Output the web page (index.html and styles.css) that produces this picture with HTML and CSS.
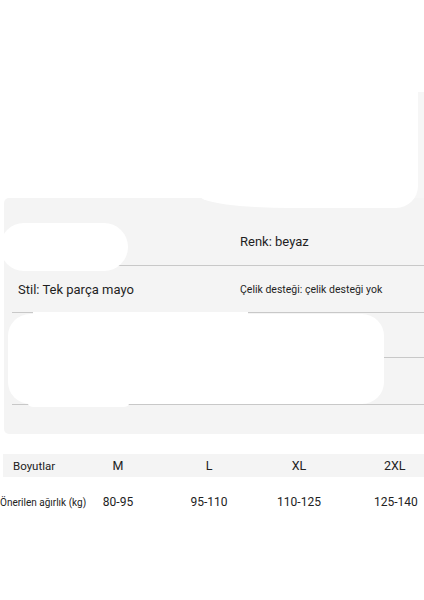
FILE: index.html
```html
<!DOCTYPE html>
<html lang="tr">
<head>
<meta charset="utf-8">
<title>Ürün bilgisi</title>
<link rel="stylesheet" href="styles.css">
</head>
<body>
<div class="page">
  <div class="top-area">
    <div class="shade"></div>
    <div class="blob blob-top"></div>
  </div>

  <section class="panel">
    <div class="prow r1">
      <div class="cell"></div>
      <div class="cell big">Renk: beyaz</div>
    </div>
    <div class="prow r2">
      <div class="cell big pad">Stil: Tek parça mayo</div>
      <div class="cell small">Çelik desteği: çelik desteği yok</div>
    </div>
    <div class="prow r3"></div>
    <div class="prow r4"></div>
    <div class="prow r5 last"></div>

    <div class="blob blob-left"></div>
    <div class="blob blob-mid"></div>
    <div class="blob patch-a"></div>
    <div class="blob patch-b"></div>
  </section>

  <section class="sizes">
    <div class="trow head">
      <div class="tl">Boyutlar</div>
      <div class="tc">M</div>
      <div class="tc">L</div>
      <div class="tc">XL</div>
      <div class="tc lastc">2XL</div>
    </div>
    <div class="trow vals">
      <div class="tl lbl">Önerilen ağırlık (kg)</div>
      <div class="tc">80-95</div>
      <div class="tc">95-110</div>
      <div class="tc">110-125</div>
      <div class="tc lastc">125-140</div>
    </div>
  </section>
</div>
</body>
</html>
```

FILE: styles.css
```css
html, body {
  margin: 0;
  padding: 0;
  background: #ffffff;
  overflow: hidden;
}
body {
  font-family: Roboto, "Noto Sans", "Liberation Sans", sans-serif;
  color: #222222;
}
.page {
  width: 424px;
  height: 600px;
  position: relative;
}
.top-area {
  height: 198px;
  position: relative;
}
.shade {
  position: absolute;
  left: 410px;
  top: 92px;
  width: 14px;
  height: 110px;
  background: #f6f6f6;
}
.blob {
  position: absolute;
  background: #ffffff;
  z-index: 2;
}
.blob-top {
  left: 200px;
  top: 40px;
  width: 218px;
  height: 168px;
  border-radius: 0 24px 22px 90px / 0 24px 22px 12px;
}

.panel {
  position: relative;
  margin-left: 4px;
  height: 236px;
  background: #f4f4f4;
  border-radius: 5px 0 0 5px;
  display: flex;
  flex-direction: column;
}
.prow {
  margin-left: 8px;
  border-bottom: 1px solid #c8c8c8;
  display: grid;
  grid-template-columns: 228px 1fr;
  align-items: center;
  box-sizing: border-box;
}
.r1 { height: 68px; padding-top: 20px; }
.r2 { height: 47px; }
.r3 { height: 45px; }
.r4 { height: 47px; }
.r5 { flex: 1; border-bottom: none; }

.cell.big {
  font-size: 13px;
  color: #1f1f1f;
}
.cell.pad { padding-left: 6px; }
.cell.small {
  font-size: 10.5px;
  color: #1f1f1f;
}

.blob-left {
  left: -4px;
  top: 25px;
  width: 128px;
  height: 48px;
  border-radius: 24px;
}
.blob-mid {
  left: 4px;
  top: 116px;
  width: 376px;
  height: 90px;
  border-radius: 22px;
}
.patch-a {
  left: 29px;
  top: 114px;
  width: 215px;
  height: 4px;
}
.patch-b {
  left: 23px;
  top: 200px;
  width: 103px;
  height: 9px;
  border-radius: 0 0 6px 6px;
}

.sizes {
  margin-top: 20px;
}
.trow {
  display: grid;
  grid-template-columns: 72px 92px 90px 90px 80px;
  align-items: center;
}
.trow.head {
  margin-left: 3px;
  grid-template-columns: 69px 92px 90px 90px 80px;
  height: 23px;
  background: #f4f4f4;
  font-size: 12.5px;
}
.trow.head .tl { padding-left: 10px; font-size: 11.5px; }
.trow.vals {
  margin-top: 13px;
  height: 24px;
  font-size: 12px;
}
.tl { white-space: nowrap; }
.lbl { font-size: 10px; }
.tc { text-align: center; }
.lastc { text-align: left; padding-left: 40px; }
.vals .lastc { padding-left: 30px; }
```
